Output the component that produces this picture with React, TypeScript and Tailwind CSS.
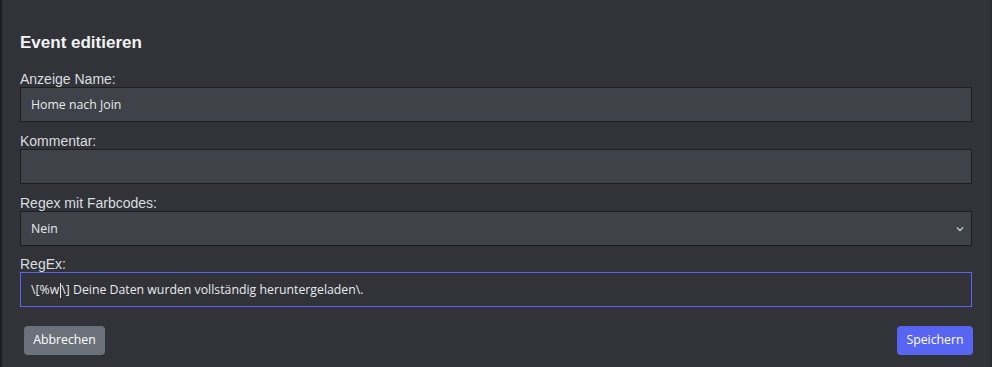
export default function App() {
  const label = "block h-4 text-[14px] leading-4 text-[#dbdee1] font-['Liberation_Sans',Arial,sans-serif]";
  const input =
    "flex h-[35px] w-full items-center border border-[#1e1f22] bg-[#3f4248] px-[10px] pt-px text-[12.3px] text-[#e8eaed] font-['Open_Sans',sans-serif]";

  return (
    <div className="min-h-screen w-full border-l-2 border-r-2 border-l-[#1e1f22] border-r-[#2a2c30] bg-[#313338] pl-[18px] pr-[18px] pt-[33px] pb-3">
      <h2 className="h-5 text-[17px] font-bold leading-5 text-[#f2f3f5] font-['Liberation_Sans',Arial,sans-serif]">
        Event editieren
      </h2>

      <div className="mt-[18px]">
        <label className={label}>Anzeige Name:</label>
        <div className={input}>Home nach Join</div>
      </div>

      <div className="mt-[11px]">
        <label className={label}>Kommentar:</label>
        <div className={input}></div>
      </div>

      <div className="mt-[11px]">
        <label className={label}>Regex mit Farbcodes:</label>
        <div className={`${input} justify-between pr-[6px]`}>
          <span>Nein</span>
          <svg width="10" height="10" viewBox="0 0 10 10" className="text-[#c4c7cc]">
            <path d="M2 3.5 L5 6.5 L8 3.5" fill="none" stroke="currentColor" strokeWidth="1.4" />
          </svg>
        </div>
      </div>

      <div className="mt-[10px]">
        <label className={label}>RegEx:</label>
        <div className="flex h-[35px] w-full items-center border border-[#5865f2] bg-[#313338] px-[10px] pt-px text-[12.3px] text-[#e8eaed] font-['Open_Sans',sans-serif]">
          <span>\[%w</span>
          <span className="mx-[0.5px] inline-block h-[15px] w-px bg-[#e3e5e8]"></span>
          <span>\] Deine Daten wurden vollständig heruntergeladen\.</span>
        </div>
      </div>

      <div className="mt-[19px] flex items-center justify-between pl-1">
        <button className="h-[29px] w-[81px] rounded-[4px] bg-[#6c727b] text-[12.3px] text-white font-['Open_Sans',sans-serif]">
          Abbrechen
        </button>
        <button className="mr-[-1px] h-[29px] w-[76px] rounded-[4px] bg-[#5865f2] text-[12.3px] text-white font-['Open_Sans',sans-serif]">
          Speichern
        </button>
      </div>
    </div>
  );
}
